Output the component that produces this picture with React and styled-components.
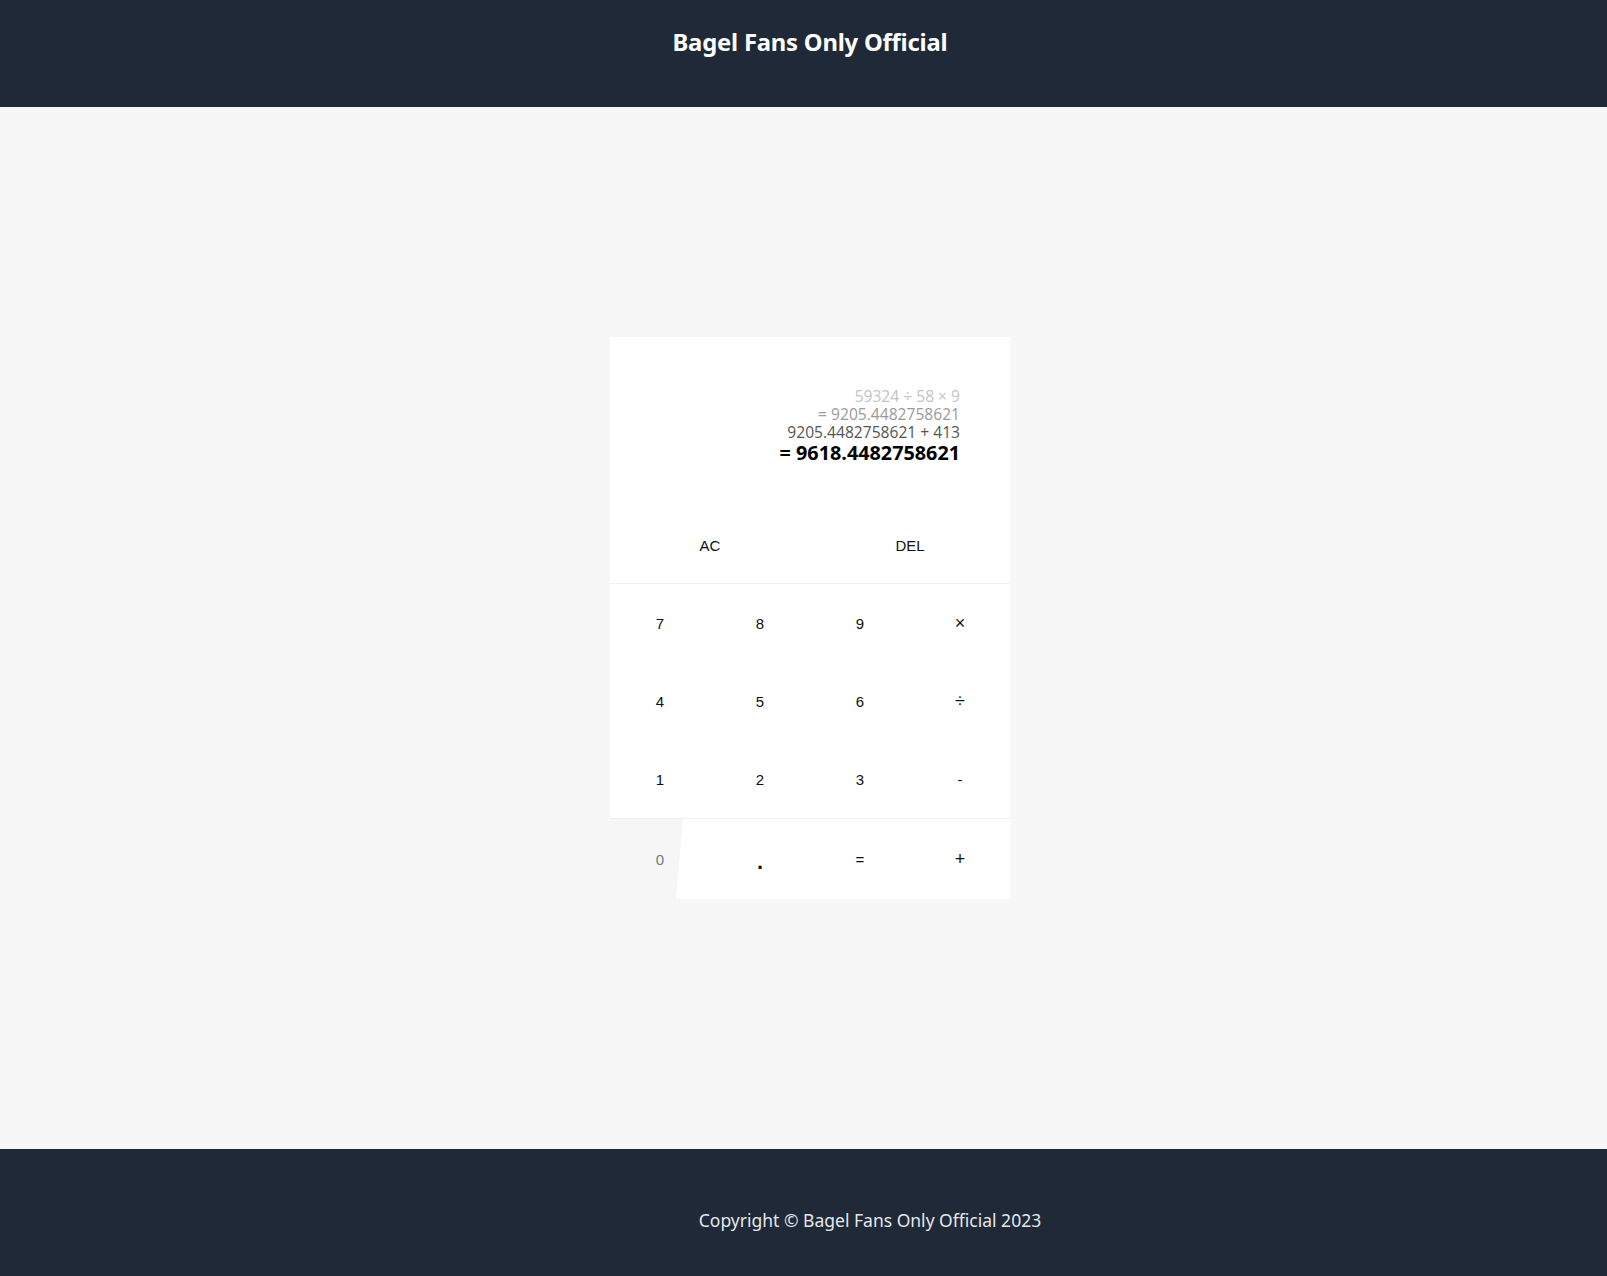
import React from "react";
import styled, { createGlobalStyle } from "styled-components";

const GlobalStyle = createGlobalStyle`
  body {
    margin: 0;
    background: #f7f7f7;
    font-family: "Noto Sans", "Open Sans", sans-serif;
  }
`;

const history = [
  { text: "59324 ÷ 58 × 9", tone: "#c4c4c4" },
  { text: "= 9205.4482758621", tone: "#9a9a9a" },
  { text: "9205.4482758621 + 413", tone: "#555555" },
];

const padRows = [
  ["7", "8", "9", "×"],
  ["4", "5", "6", "÷"],
  ["1", "2", "3", "-"],
];

const operators = ["×", "÷"];

export default function App() {
  return (
    <>
      <GlobalStyle />
      <Header>
        <Title>Bagel Fans Only Official</Title>
      </Header>
      <Main>
        <Calculator>
          <Display>
            {history.map((line, i) => (
              <HistoryLine key={i} $tone={line.tone}>{line.text}</HistoryLine>
            ))}
            <Result>= 9618.4482758621</Result>
          </Display>
          <ControlRow>
            <Key>AC</Key>
            <Key>DEL</Key>
          </ControlRow>
          <NumberPad>
            {padRows.flat().map((k) => (
              <Key key={k} $op={operators.includes(k)}>{k}</Key>
            ))}
          </NumberPad>
          <BottomRow>
            <Key $muted>0</Key>
            <Key $big>.</Key>
            <Key>=</Key>
            <Key $op>+</Key>
          </BottomRow>
        </Calculator>
      </Main>
      <Footer>
        <FooterText>Copyright © Bagel Fans Only Official 2023</FooterText>
      </Footer>
    </>
  );
}

const Header = styled.header`
  height: 107px;
  background: #1f2937;
  display: flex;
  align-items: center;
  justify-content: center;
  padding-left: 13px;
  padding-bottom: 24px;
  box-sizing: border-box;
`;

const Title = styled.h1`
  margin: 0;
  color: #ffffff;
  font-size: 23.8px;
  font-weight: 700;
  letter-spacing: -0.2px;
`;

const Main = styled.main`
  height: 1042px;
  box-sizing: border-box;
  display: flex;
  flex-direction: column;
  align-items: center;
  padding-top: 230px;
  padding-left: 13px;
`;

const Calculator = styled.div`
  width: 400px;
  display: flex;
  flex-direction: column;
`;

const Display = styled.div`
  height: 168px;
  background: #fff;
  display: flex;
  flex-direction: column;
  justify-content: center;
  align-items: flex-end;
  padding: 8px 50px 0 0;
  box-sizing: border-box;
  font-family: "Open Sans", "Noto Sans", sans-serif;
`;

const HistoryLine = styled.div`
  font-size: 15.6px;
  line-height: 18px;
  color: ${(p) => p.$tone};
`;

const Result = styled.div`
  font-size: 19.8px;
  line-height: 23px;
  font-weight: 700;
  color: #000;
`;

const ControlRow = styled.div`
  display: grid;
  grid-template-columns: 1fr 1fr;
  height: 75px;
  padding-top: 3px;
  background: #fff;
  border-bottom: 1px solid #f0f0f0;
`;

const NumberPad = styled.div`
  display: grid;
  grid-template-columns: repeat(4, 1fr);
  grid-auto-rows: 78px;
  background: #fff;
  border-bottom: 1px solid #f0f0f0;
`;

const BottomRow = styled.div`
  position: relative;
  display: grid;
  grid-template-columns: repeat(4, 1fr);
  height: 80px;
  background: #f6f6f6;

  &::before {
    content: "";
    position: absolute;
    inset: 0;
    background: #fff;
    clip-path: polygon(73px 0, 100% 0, 100% 100%, 66px 100%);
  }
`;

const Key = styled.button`
  position: relative;
  border: none;
  background: transparent;
  padding: 0;
  display: flex;
  align-items: center;
  justify-content: center;
  font-family: "Liberation Sans", Arial, sans-serif;
  font-size: ${(p) => (p.$big ? "22px" : p.$op ? "18px" : "15px")};
  font-weight: ${(p) => (p.$big ? 700 : 400)};
  color: ${(p) => (p.$muted ? "#777" : "#111")};
  padding-top: ${(p) => (p.$big ? "5px" : "0")};
  cursor: pointer;
`;

const Footer = styled.footer`
  height: 127px;
  background: #1f2937;
  display: flex;
  align-items: center;
  justify-content: center;
  padding-left: 133px;
  padding-top: 14px;
  box-sizing: border-box;
`;

const FooterText = styled.p`
  margin: 0;
  color: #e5e7eb;
  font-size: 17.5px;
`;
